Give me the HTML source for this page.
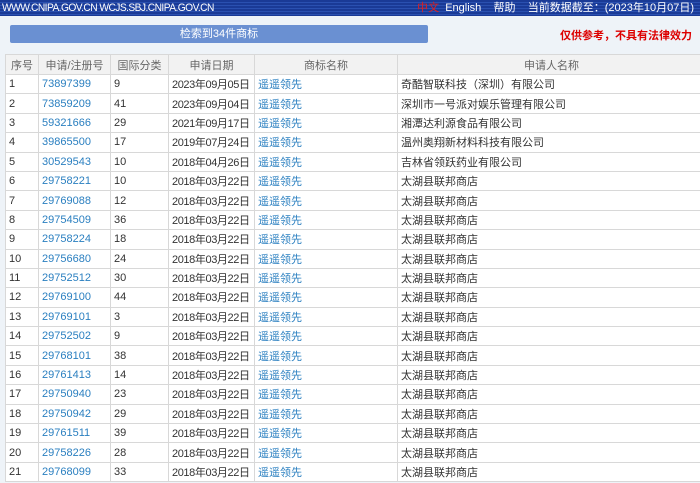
<!DOCTYPE html>
<html><head><meta charset="utf-8"><style>
body{margin:0;width:700px;height:483px;overflow:hidden;background:#eef3f8;font-family:"Liberation Sans","Noto Sans CJK SC",sans-serif;font-size:11px;color:#333}
.top{height:16px;background:repeating-linear-gradient(#1a3a96 0,#1a3a96 2px,#2a50b0 2px,#2a50b0 3px);color:#fff;font-size:11px;line-height:16px;position:relative}
.top .l{position:absolute;left:2px;letter-spacing:-0.6px;transform:scaleX(0.93);transform-origin:left}
.top .r{position:absolute;right:6px}
.btn{position:absolute;left:10px;top:25px;width:418px;height:18px;background:#6a90d2;border-radius:2px;color:#fff;text-align:center;line-height:18px;font-size:11px}
.warn{position:absolute;right:8px;top:27px;color:#d00;font-weight:bold;font-size:11px}
table{position:absolute;left:5px;top:54px;border-collapse:collapse;width:700px;table-layout:fixed}
td,th{border:1px solid #d8d8d8;height:18.4px;padding:0 0 0 3px;white-space:nowrap;overflow:hidden;font-weight:normal;font-size:11px}
td:nth-child(4){letter-spacing:-0.4px}
th{background:#f2f2f2;color:#666;text-align:center;padding:0;height:19px}
tr.d td{background:#fff}
a{color:#2a7fc0;text-decoration:none}
</style></head><body>
<div class="top"><span class="l">WWW.CNIPA.GOV.CN WCJS.SBJ.CNIPA.GOV.CN</span><span class="r"><span style="color:#e02020">中文</span>&nbsp; English &nbsp;&nbsp; 帮助 &nbsp;&nbsp; 当前数据截至：(2023年10月07日)</span></div>
<div class="btn">检索到34件商标</div>
<div class="warn">仅供参考，不具有法律效力</div>
<table>
<colgroup><col style="width:33px"><col style="width:72px"><col style="width:58px"><col style="width:86px"><col style="width:143px"><col style="width:308px"></colgroup>
<tr><th>序号</th><th>申请/注册号</th><th>国际分类</th><th>申请日期</th><th>商标名称</th><th>申请人名称</th></tr>
<tr class="d"><td>1</td><td><a>73897399</a></td><td>9</td><td>2023年09月05日</td><td><a>遥遥领先</a></td><td>奇酷智联科技（深圳）有限公司</td></tr>
<tr class="d"><td>2</td><td><a>73859209</a></td><td>41</td><td>2023年09月04日</td><td><a>遥遥领先</a></td><td>深圳市一号派对娱乐管理有限公司</td></tr>
<tr class="d"><td>3</td><td><a>59321666</a></td><td>29</td><td>2021年09月17日</td><td><a>遥遥领先</a></td><td>湘潭达利源食品有限公司</td></tr>
<tr class="d"><td>4</td><td><a>39865500</a></td><td>17</td><td>2019年07月24日</td><td><a>遥遥领先</a></td><td>温州奥翔新材料科技有限公司</td></tr>
<tr class="d"><td>5</td><td><a>30529543</a></td><td>10</td><td>2018年04月26日</td><td><a>遥遥领先</a></td><td>吉林省领跃药业有限公司</td></tr>
<tr class="d"><td>6</td><td><a>29758221</a></td><td>10</td><td>2018年03月22日</td><td><a>遥遥领先</a></td><td>太湖县联邦商店</td></tr>
<tr class="d"><td>7</td><td><a>29769088</a></td><td>12</td><td>2018年03月22日</td><td><a>遥遥领先</a></td><td>太湖县联邦商店</td></tr>
<tr class="d"><td>8</td><td><a>29754509</a></td><td>36</td><td>2018年03月22日</td><td><a>遥遥领先</a></td><td>太湖县联邦商店</td></tr>
<tr class="d"><td>9</td><td><a>29758224</a></td><td>18</td><td>2018年03月22日</td><td><a>遥遥领先</a></td><td>太湖县联邦商店</td></tr>
<tr class="d"><td>10</td><td><a>29756680</a></td><td>24</td><td>2018年03月22日</td><td><a>遥遥领先</a></td><td>太湖县联邦商店</td></tr>
<tr class="d"><td>11</td><td><a>29752512</a></td><td>30</td><td>2018年03月22日</td><td><a>遥遥领先</a></td><td>太湖县联邦商店</td></tr>
<tr class="d"><td>12</td><td><a>29769100</a></td><td>44</td><td>2018年03月22日</td><td><a>遥遥领先</a></td><td>太湖县联邦商店</td></tr>
<tr class="d"><td>13</td><td><a>29769101</a></td><td>3</td><td>2018年03月22日</td><td><a>遥遥领先</a></td><td>太湖县联邦商店</td></tr>
<tr class="d"><td>14</td><td><a>29752502</a></td><td>9</td><td>2018年03月22日</td><td><a>遥遥领先</a></td><td>太湖县联邦商店</td></tr>
<tr class="d"><td>15</td><td><a>29768101</a></td><td>38</td><td>2018年03月22日</td><td><a>遥遥领先</a></td><td>太湖县联邦商店</td></tr>
<tr class="d"><td>16</td><td><a>29761413</a></td><td>14</td><td>2018年03月22日</td><td><a>遥遥领先</a></td><td>太湖县联邦商店</td></tr>
<tr class="d"><td>17</td><td><a>29750940</a></td><td>23</td><td>2018年03月22日</td><td><a>遥遥领先</a></td><td>太湖县联邦商店</td></tr>
<tr class="d"><td>18</td><td><a>29750942</a></td><td>29</td><td>2018年03月22日</td><td><a>遥遥领先</a></td><td>太湖县联邦商店</td></tr>
<tr class="d"><td>19</td><td><a>29761511</a></td><td>39</td><td>2018年03月22日</td><td><a>遥遥领先</a></td><td>太湖县联邦商店</td></tr>
<tr class="d"><td>20</td><td><a>29758226</a></td><td>28</td><td>2018年03月22日</td><td><a>遥遥领先</a></td><td>太湖县联邦商店</td></tr>
<tr class="d"><td>21</td><td><a>29768099</a></td><td>33</td><td>2018年03月22日</td><td><a>遥遥领先</a></td><td>太湖县联邦商店</td></tr>
</table>
</body></html>
